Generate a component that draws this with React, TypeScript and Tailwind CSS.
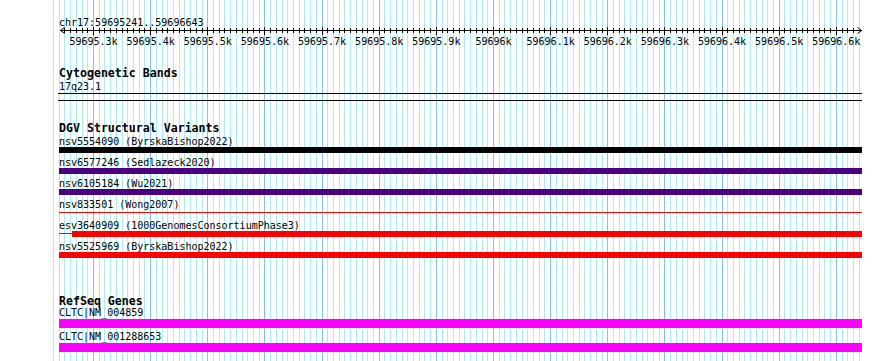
import React from "react";

const X0 = 93;
const STEP = 5.714;
const gridXs: { x: number; major: boolean; k: number }[] = [];
for (let k = -7; k <= 134; k++) {
  gridXs.push({ x: Math.round(X0 + k * STEP), major: k % 10 === 0, k });
}

const majorLabels: { x: number; label: string }[] = [];
for (let i = 0; i < 14; i++) {
  const v = 59695300 + i * 100;
  const s = (v / 1000).toFixed(1);
  const label = (s.endsWith(".0") ? s.slice(0, -2) : s) + "k";
  majorLabels.push({ x: X0 + i * 10 * STEP, label });
}

function Grid() {
  return (
    <svg className="absolute inset-0 pointer-events-none" width={890} height={361}>
      {gridXs.map((g) => (
        <rect
          key={g.k}
          x={g.x}
          y={0}
          width={1}
          height={361}
          fill={g.major ? "#7cc6ee" : "#a9eef2"}
        />
      ))}
    </svg>
  );
}

function Ruler() {
  return (
    <svg width={890} height={20} className="block -ml-[59px] overflow-visible">
      <rect x={60} y={3} width={802} height={1} fill="#000" />
      <path d="M60.5 3.5 L64.5 0.5 M60.5 3.5 L64.5 6.5" stroke="#000" strokeWidth={1} fill="none" />
      <path d="M861.5 3.5 L857.5 0.5 M861.5 3.5 L857.5 6.5" stroke="#000" strokeWidth={1} fill="none" />
      {gridXs
        .filter((g) => g.x >= 62 && g.x <= 858)
        .map((g) => (
          <rect
            key={g.k}
            x={g.x}
            y={g.major ? 0 : 1}
            width={1}
            height={g.major ? 8 : 5}
            fill="#000"
          />
        ))}
      {majorLabels.map((m) => (
        <text
          key={m.label}
          x={m.x + 0.5}
          y={18}
          textAnchor="middle"
          fontFamily="'DejaVu Sans Mono', monospace"
          fontSize={10}
          fill="#000"
        >
          {m.label}
        </text>
      ))}
    </svg>
  );
}

function TrackTitle({ children, className = "" }: { children: React.ReactNode; className?: string }) {
  return <div className={`h-[13px] leading-[13px] text-[11.6px] font-bold ${className}`}>{children}</div>;
}

function Label({ children, className = "" }: { children: React.ReactNode; className?: string }) {
  return (
    <div className={`relative z-10 h-[11px] text-[10px] whitespace-pre ${className}`}>{children}</div>
  );
}

type Row = { label: string; kind: "bar" | "line" | "split"; color: string };

const dgv: Row[] = [
  { label: "nsv5554090 (ByrskaBishop2022)", kind: "bar", color: "bg-[#000000]" },
  { label: "nsv6577246 (Sedlazeck2020)", kind: "bar", color: "bg-[#4b0082]" },
  { label: "nsv6105184 (Wu2021)", kind: "bar", color: "bg-[#4b0082]" },
  { label: "nsv833501 (Wong2007)", kind: "line", color: "bg-[#ff0000]" },
  { label: "esv3640909 (1000GenomesConsortiumPhase3)", kind: "split", color: "bg-[#ff0000]" },
  { label: "nsv5525969 (ByrskaBishop2022)", kind: "bar", color: "bg-[#ff0000]" },
];

function DgvRow({ row, first }: { row: Row; first: boolean }) {
  return (
    <div className={first ? "mt-[1px]" : "mt-[4px]"}>
      <Label className="leading-[11px]">{row.label}</Label>
      {row.kind === "bar" && <div className={`h-[6px] w-[803px] ${row.color}`} />}
      {row.kind === "line" && (
        <div className="h-[6px] w-[803px] pt-[2px]">
          <div className={`h-[1px] w-full ${row.color}`} />
        </div>
      )}
      {row.kind === "split" && (
        <div className="h-[6px] w-[803px] flex">
          <div className="w-[13px] pt-[2px]">
            <div className={`h-[1px] w-full ${row.color}`} />
          </div>
          <div className={`flex-1 h-[6px] ${row.color}`} />
        </div>
      )}
    </div>
  );
}

export default function App() {
  return (
    <div
      className="relative w-[890px] h-[361px] overflow-hidden bg-white text-black"
      style={{ fontFamily: "'DejaVu Sans Mono', 'Liberation Mono', monospace" }}
    >
      <Grid />
      <div className="relative pl-[59px] pt-[17px]">
        <div className="h-[10px] leading-[12px] text-[10px]">chr17:59695241..59696643</div>
        <Ruler />

        <TrackTitle className="mt-[20px]">Cytogenetic Bands</TrackTitle>
        <Label className="mt-[1px] leading-[11px]">17q23.1</Label>
        <div className="-ml-[1px] mt-[1px] h-[1px] w-[804px] bg-black" />
        <div className="-ml-[1px] mt-[6px] h-[1px] w-[804px] bg-black" />

        <TrackTitle className="mt-[21px]">DGV Structural Variants</TrackTitle>
        {dgv.map((r, i) => (
          <DgvRow key={r.label} row={r} first={i === 0} />
        ))}

        <TrackTitle className="mt-[37px]">RefSeq Genes</TrackTitle>
        <Label className="mt-[0px] leading-[9px]">CLTC|NM_004859</Label>
        <div className="h-[9px] w-[803px] bg-[#ff00ff]" />
        <Label className="mt-[4px] leading-[9px]">CLTC|NM_001288653</Label>
        <div className="h-[9px] w-[803px] bg-[#ff00ff]" />
      </div>
    </div>
  );
}
